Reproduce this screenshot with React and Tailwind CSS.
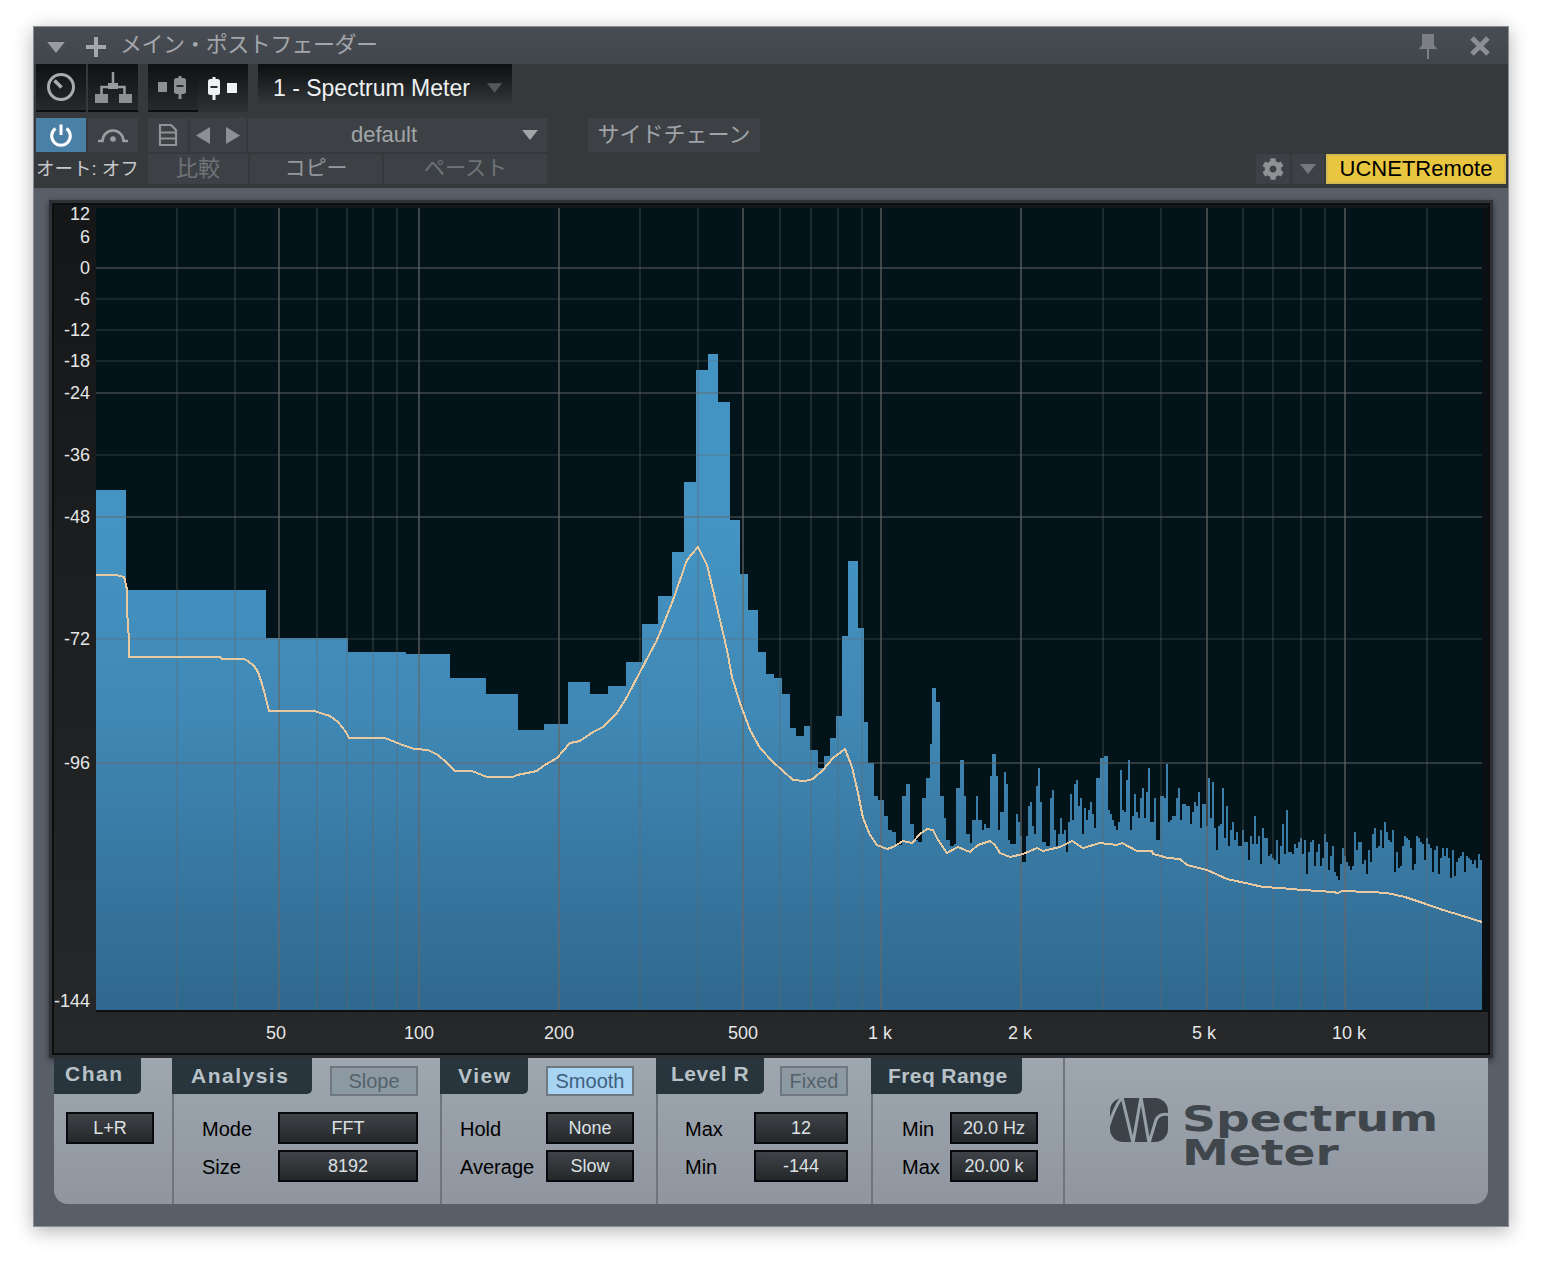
import React from "react";
import { FaCog } from "react-icons/fa";

// spectrum outline, page coordinates: [right edge of the step, top]
const steps = [
  [126, 490], [266, 590], [348, 638], [406, 652], [450, 654], [486, 678], [518, 694], [544, 730], [568, 724], [590, 682],
  [608, 694], [626, 686], [642, 662], [658, 624], [672, 596], [684, 552], [696, 482], [708, 370], [718, 354], [730, 402],
  [740, 520], [748, 574], [758, 610], [766, 652], [774, 674], [782, 678], [790, 694], [796, 728], [804, 736], [810, 726],
  [818, 750], [824, 768], [830, 756], [836, 738], [842, 716], [848, 636], [858, 561], [864, 628], [868, 722], [874, 763],
  [878, 796], [884, 800], [888, 816], [892, 830], [896, 832], [902, 845], [906, 796], [910, 784], [914, 824], [918, 840],
  [922, 842], [926, 798], [930, 778], [932, 744], [936, 688], [940, 702], [944, 796], [946, 818], [950, 840], [954, 846],
  [956, 844], [960, 788], [964, 760], [966, 796], [970, 834], [972, 843], [976, 820], [978, 796], [982, 820], [984, 830],
  [986, 824], [990, 828], [992, 776], [996, 754], [998, 776], [1000, 830], [1004, 812], [1006, 772], [1008, 784],
  [1010, 840], [1014, 844],
];

// from x = 1014 on the bins are 2px wide
const fineTops = [
  844, 814, 822, 836, 862, 862, 836, 806, 802, 826, 834, 786, 768, 802, 842, 842, 846, 846, 798, 790, 830, 846, 834, 818,
  834, 830, 852, 822, 794, 820, 784, 780, 806, 798, 834, 808, 820, 810, 802, 814, 828, 778, 778, 758, 758, 756, 756, 810,
  814, 820, 826, 830, 822, 770, 810, 812, 780, 760, 830, 816, 794, 812, 818, 798, 788, 818, 792, 768, 822, 822, 798, 840,
  840, 796, 796, 798, 764, 822,
  820, 816, 816, 798, 788, 820, 804, 804, 806, 806, 824, 812, 802, 806, 792, 828, 804, 804, 826, 778, 818, 782, 828, 850,
  826, 824, 788, 838, 806, 846, 830, 822, 840, 832, 846, 846, 830, 842, 842, 860, 836, 844, 816, 844, 836, 864, 828, 838,
  838, 856, 854, 858, 860, 840, 864, 846, 824, 854, 810, 852, 852, 854, 844, 848, 842, 838, 854, 840, 874, 852, 842, 840,
  866, 852, 844, 866, 858, 834, 842, 870, 856, 846, 872, 876, 880, 864, 848, 856, 862, 866, 870, 866, 832, 850, 842, 842,
  864, 860, 874, 850, 862, 834, 828, 848, 846, 830, 848, 822, 832, 840, 842, 830, 872, 852, 868, 866, 846, 836, 838, 840,
  848, 870, 864, 836, 838, 842, 844, 860, 838, 844, 848, 872, 850, 846, 874, 858, 848, 856, 848, 858, 878, 850, 876, 862,
  858, 856, 852, 872, 856, 858, 860, 864, 860, 868, 854, 860,
];

const curve = [
  [96, 575], [116, 575], [124, 577], [125, 580], [127, 590], [127, 610], [129, 640], [129, 657], [220, 657], [222, 659],
  [244, 659], [248, 661], [254, 666], [258, 672], [262, 684], [265, 695], [268, 707], [269, 711], [315, 711], [320, 713],
  [330, 716], [338, 722], [346, 732], [349, 738], [385, 738], [395, 742], [405, 746], [415, 749], [428, 750], [438, 755],
  [447, 763], [455, 771], [472, 771], [487, 777], [513, 777], [517, 775], [527, 773], [537, 771], [543, 766], [557, 758],
  [570, 743], [580, 741], [593, 732], [603, 727], [617, 713], [627, 697], [640, 672], [657, 640], [672, 603], [687, 560],
  [698, 547], [707, 565], [713, 590], [720, 620], [727, 650], [732, 677], [740, 703], [750, 730], [760, 748], [773, 762],
  [793, 780], [805, 781], [813, 779], [823, 770], [833, 758], [845, 749], [852, 767], [858, 793], [863, 818], [870, 835],
  [877, 845], [887, 849], [893, 847], [903, 841], [912, 843], [920, 834], [927, 829], [933, 830], [938, 840], [947, 853],
  [958, 847], [965, 850], [970, 852], [978, 845], [990, 841], [995, 845], [1000, 853], [1010, 857], [1023, 854], [1037, 848],
  [1043, 851], [1060, 847], [1072, 841], [1083, 848], [1100, 843], [1117, 845], [1122, 843], [1137, 851], [1152, 851],
  [1153, 854], [1168, 858], [1180, 859], [1187, 865], [1207, 870], [1227, 879], [1250, 884], [1263, 887], [1280, 888],
  [1303, 890], [1333, 892], [1338, 893], [1342, 891], [1370, 892], [1387, 893], [1405, 897], [1423, 903], [1443, 910],
  [1463, 916], [1482, 922],
];

const spectrumPath = () => {
  let d = "M96 1010";
  let x = 96;
  steps.forEach(([end, top]) => {
    d += `L${x} ${top}L${end} ${top}`;
    x = end;
  });
  fineTops.forEach((top) => {
    d += `L${x} ${top}L${x + 2} ${top}`;
    x += 2;
  });
  return d + "L1482 1010Z";
};

const brightV = [279, 419, 559, 743, 881, 1021, 1207, 1345];
const dimV = [177, 235, 317, 347, 373, 397, 640, 698, 780, 811, 838, 862, 1103, 1161, 1243, 1273, 1301, 1325, 1427];
const brightH = [268, 393, 517, 763];
const dimH = [299, 330, 361, 455, 639];

const yLabels = [
  ["12", 214], ["6", 237], ["0", 268], ["-6", 299], ["-12", 330], ["-18", 361], ["-24", 393], ["-36", 455], ["-48", 517],
  ["-72", 639], ["-96", 763], ["-144", 1001],
];
const xLabels = [
  ["50", 276], ["100", 419], ["200", 559], ["500", 743], ["1 k", 880], ["2 k", 1020], ["5 k", 1204], ["10 k", 1349],
];

const Triangle = ({ className, color = "#8f9397" }) => (
  <svg className={className} viewBox="0 0 16 10">
    <path d="M0 0H16L8 10Z" fill={color} />
  </svg>
);

const Fader = ({ x, color }) => (
  <g>
    <path d={`M${x} 0V23`} stroke={color} strokeWidth="3" />
    <rect x={x - 6} y="2" width="12" height="16" rx="2.5" fill={color} />
    <path d={`M${x - 3.5} 10H${x + 3.5}`} stroke="#2a2c2e" strokeWidth="2" />
  </g>
);

const Toolbar = () => (
  <div className="bg-[#35393c] h-[124px] pl-[2px] flex flex-col">
    <div className="flex h-[48px]">
      <div className="flex gap-[2px] w-[102px]">
        <div className="w-[50px] bg-gradient-to-b from-[#0f1113] to-[#27292b] border-b-2 border-[#0c0d0e] flex items-center justify-center">
          <svg width="30" height="30" viewBox="0 0 30 30" fill="none" stroke="#a9abac" strokeWidth="3">
            <circle cx="15" cy="15" r="12.5" />
            <path d="M15.5 15.5L8.5 8.5" strokeWidth="3.5" />
          </svg>
        </div>
        <div className="w-[50px] bg-gradient-to-b from-[#0f1113] to-[#27292b] border-b-2 border-[#0c0d0e] flex items-center justify-center">
          <svg width="38" height="32" viewBox="0 0 38 32" className="mt-px">
            <path d="M19 0V14M7.5 23V15H30.5V23" stroke="#999b9d" strokeWidth="2.5" fill="none" />
            <rect x="14" y="11" width="10" height="6" fill="#999b9d" />
            <rect x="1" y="22" width="13" height="9" fill="#8d8f91" />
            <rect x="25" y="22" width="13" height="9" fill="#8d8f91" />
          </svg>
        </div>
      </div>
      <div className="flex ml-[10px] w-[100px]">
        <div className="w-[50px] bg-gradient-to-b from-[#0f1113] to-[#27292b] border-b-2 border-[#0c0d0e] flex items-center justify-center">
          <svg width="30" height="23" viewBox="0 0 30 23">
            <rect x="0" y="6" width="9" height="10" fill="#8e9092" />
            <Fader x={22} color="#8e9092" />
          </svg>
        </div>
        <div className="w-[50px] bg-gradient-to-b from-[#0f1113] to-[#2f3235] flex items-center justify-center">
          <svg width="30" height="23" viewBox="0 0 30 23">
            <Fader x={6} color="#f0f1f2" />
            <rect x="19" y="6" width="10" height="10" fill="#f0f1f2" />
          </svg>
        </div>
      </div>
      <div className="ml-[10px] w-[254px] h-[42px] pl-[15px] pr-[10px] bg-gradient-to-b from-[#0d0f10] to-[#35393c] flex items-center justify-between">
        <span className="text-[23px] text-[#eef0f1] pt-[7px]">1 - Spectrum Meter</span>
        <Triangle className="w-[15px] h-[10px] mt-[5px]" color="#54585c" />
      </div>
    </div>

    <div className="flex h-[34px] mt-[6px]">
      <div className="w-[50px] bg-[#4a80a6] flex items-center justify-center">
        <svg width="24" height="24" viewBox="0 0 24 24" fill="none" stroke="#ffffff" strokeWidth="3">
          <path d="M12 1.5V12" />
          <path d="M6.5 5.5A9.3 9.3 0 1 0 17.5 5.5" />
        </svg>
      </div>
      <div className="w-[50px] ml-[2px] bg-[#3d4145] flex items-center justify-center">
        <svg width="32" height="18" viewBox="0 0 32 18" fill="none" stroke="#9c9fa2" strokeWidth="2.5">
          <path d="M1 15H5.5A10.5 10.5 0 0 1 26.5 15H31" />
          <circle cx="16" cy="13" r="2.8" fill="#9c9fa2" stroke="none" />
        </svg>
      </div>
      <div className="w-[40px] ml-[10px] bg-[#3d4145] flex items-center justify-center">
        <svg width="20" height="22" viewBox="0 0 20 22" fill="none" stroke="#8f9396" strokeWidth="2.2">
          <path d="M2 1H13L18 6V21H2Z" />
          <path d="M2 8.5H18M2 14.5H18" />
        </svg>
      </div>
      <div className="w-[56px] ml-[2px] bg-[#3d4145] flex items-center justify-between px-[6px]">
        <svg width="14" height="17" viewBox="0 0 14 17"><path d="M14 0V17L0 8.5Z" fill="#8d9094" /></svg>
        <svg width="14" height="17" viewBox="0 0 14 17"><path d="M0 0V17L14 8.5Z" fill="#8d9094" /></svg>
      </div>
      <div className="w-[299px] ml-[2px] bg-[#3d4145] relative flex items-center justify-center text-[22px] text-[#a1a5a8] pb-[2px]">
        <span className="pr-[27px]">default</span>
        <Triangle className="absolute right-[9px] top-[12px] w-[16px] h-[10px]" color="#a1a5a8" />
      </div>
      <div className="w-[172px] ml-[41px] bg-[#3d4145] flex items-center justify-center text-[22px] text-[#a0a4a8] pb-[2px]">
        サイドチェーン
      </div>
    </div>

    <div className="flex h-[30px] mt-[2px]">
      <div className="w-[112px] pr-[10px] flex items-center text-[18.5px] whitespace-nowrap text-[#c6c9cb]">オート: オフ</div>
      <div className="w-[100px] bg-[#3d4145] flex items-center justify-center text-[22px] text-[#6f7478] pb-[2px]">比較</div>
      <div className="w-[132px] ml-[2px] bg-[#3d4145] flex items-center justify-center text-[21px] text-[#95989c] pb-[2px]">コピー</div>
      <div className="w-[163px] ml-[2px] bg-[#3d4145] flex items-center justify-center text-[21px] text-[#6f7478] pb-[2px]">ペースト</div>
      <div className="ml-auto mr-[2px] flex">
        <div className="w-[34px] bg-[#3d4145] flex items-center justify-center">
          <FaCog className="w-[22px] h-[22px] text-[#8f9295]" />
        </div>
        <div className="w-[32px] ml-[2px] bg-[#3d4145] flex items-center justify-center">
          <Triangle className="w-[16px] h-[10px]" color="#75797d" />
        </div>
        <div className="w-[180px] ml-[2px] bg-[#e9c63f] border-2 border-[#d6bb52] flex items-center justify-center text-[22px] text-black pb-[2px]">
          UCNETRemote
        </div>
      </div>
    </div>
  </div>
);

const Meter = () => (
  <div className="h-[858px] border-[3px] border-[#2d3135] shadow-[0_2px_6px_rgba(0,0,0,0.5)]">
    <div className="h-full border-2 border-[#0c0e0f] bg-gradient-to-b from-[#141618] to-[#26282a] pt-[3px] flex flex-col">
      <div className="flex h-[802px]">
        <div className="w-[42px] relative text-[18px] leading-[20px] text-[#e4e6e7]">
          {yLabels.map(([t, y]) => (
            <span key={t} className="absolute right-[6px]" style={{ top: y - 218 }}>
              {t}
            </span>
          ))}
        </div>
        <svg width="1386" height="802" viewBox="96 208 1386 802" className="bg-[#02141a] block shrink-0">
          <defs>
            <linearGradient id="fill" gradientUnits="userSpaceOnUse" x1="0" y1="520" x2="0" y2="1010">
              <stop offset="0" stopColor="#4494c3" />
              <stop offset="0.4" stopColor="#4088b5" />
              <stop offset="1" stopColor="#2f688e" />
            </linearGradient>
          </defs>
          <path d={spectrumPath()} fill="url(#fill)" />
          {dimV.map((x) => (
            <path key={x} d={`M${x} 208V1010`} stroke="#666" strokeOpacity="0.28" strokeWidth="2" />
          ))}
          {brightV.map((x) => (
            <path key={x} d={`M${x} 208V1010`} stroke="#666" strokeOpacity="0.62" strokeWidth="2" />
          ))}
          {dimH.map((y) => (
            <path key={y} d={`M96 ${y}H1482`} stroke="#666" strokeOpacity="0.32" strokeWidth="1.5" />
          ))}
          {brightH.map((y) => (
            <path key={y} d={`M96 ${y}H1482`} stroke="#666" strokeOpacity="0.62" strokeWidth="1.5" />
          ))}
          <polyline
            points={curve.map((p) => p.join(",")).join(" ")}
            fill="none"
            stroke="#e9c9a0"
            strokeWidth="2"
            shapeRendering="crispEdges"
          />
        </svg>
        <div className="flex-1 bg-[#0a1013]" />
      </div>
      <div className="flex-1 ml-[42px] relative text-[18px] leading-[20px] text-[#e4e6e7] border-t-2 border-[#0c0e0f]">
        {xLabels.map(([t, x]) => (
          <span key={t} className="absolute top-[11px] -translate-x-1/2 whitespace-nowrap" style={{ left: x - 96 }}>
            {t}
          </span>
        ))}
      </div>
    </div>
  </div>
);

const Tab = ({ className, children }) => (
  <div className={`h-[36px] bg-[#28353c] rounded-br-[5px] flex items-center font-bold text-[21px] text-[#b9c2c8] ${className}`}>
    {children}
  </div>
);

const Toggle = ({ className, children }) => (
  <div className={`h-[30px] mt-2 border-2 border-[#6f7880] flex items-center justify-center text-[20px] ${className}`}>
    {children}
  </div>
);

const Btn = ({ className, children }) => (
  <div className={`h-8 border-2 border-[#08090a] bg-gradient-to-b from-[#3f4347] to-[#25282b] flex items-center justify-center text-[18px] text-[#dde1e3] ${className}`}>
    {children}
  </div>
);

const Row = ({ label, labelClass, btnClass, value }) => (
  <div className="flex items-center">
    <span className={`text-[20px] text-black pt-[2px] ${labelClass}`}>{label}</span>
    <Btn className={btnClass}>{value}</Btn>
  </div>
);

const Controls = () => (
  <div className="ml-[5px] w-[1434px] h-[146px] rounded-b-[14px] bg-gradient-to-b from-[#9ea6b0] to-[#8f969f] flex">
    <div className="w-[118px] flex flex-col">
      <Tab className="w-[87px] pl-[11px] pb-1 tracking-[1.5px]">Chan</Tab>
      <div className="mt-[18px] pl-3">
        <Btn className="w-[88px]">L+R</Btn>
      </div>
    </div>

    <div className="w-[268px] border-l-2 border-[#6e757d] flex flex-col">
      <div className="flex h-[36px]">
        <Tab className="w-[140px] -ml-0.5 pl-[19px] tracking-[1.5px]">Analysis</Tab>
        <Toggle className="w-[88px] ml-[18px] bg-gradient-to-b from-[#8e99a2] to-[#8a9aa3] text-[#56626b]">Slope</Toggle>
      </div>
      <div className="mt-[18px] pl-[28px] flex flex-col gap-1.5">
        <Row label="Mode" labelClass="w-[76px]" btnClass="w-[140px]" value="FFT" />
        <Row label="Size" labelClass="w-[76px]" btnClass="w-[140px]" value="8192" />
      </div>
    </div>

    <div className="w-[216px] border-l-2 border-[#6e757d] flex flex-col">
      <div className="flex h-[36px]">
        <Tab className="w-[88px] -ml-0.5 pl-[18px] tracking-[1.5px]">View</Tab>
        <Toggle className="w-[88px] ml-[18px] bg-[#a6d4f2] text-[#3f6080]">Smooth</Toggle>
      </div>
      <div className="mt-[18px] pl-[18px] flex flex-col gap-1.5">
        <Row label="Hold" labelClass="w-[86px]" btnClass="w-[88px]" value="None" />
        <Row label="Average" labelClass="w-[86px]" btnClass="w-[88px]" value="Slow" />
      </div>
    </div>

    <div className="w-[215px] border-l-2 border-[#6e757d] flex flex-col">
      <div className="flex h-[36px]">
        <Tab className="w-[108px] -ml-0.5 pl-[15px] pb-1 tracking-[0.5px]">Level R</Tab>
        <Toggle className="w-[68px] ml-[16px] bg-gradient-to-b from-[#8e99a2] to-[#8a9aa3] text-[#56626b]">Fixed</Toggle>
      </div>
      <div className="mt-[18px] pl-[27px] flex flex-col gap-1.5">
        <Row label="Max" labelClass="w-[69px]" btnClass="w-[94px]" value="12" />
        <Row label="Min" labelClass="w-[69px]" btnClass="w-[94px]" value="-144" />
      </div>
    </div>

    <div className="w-[192px] border-l-2 border-[#6e757d] flex flex-col">
      <Tab className="w-[151px] -ml-0.5 pl-[17px] tracking-[0.4px]">Freq Range</Tab>
      <div className="mt-[18px] pl-[29px] flex flex-col gap-1.5">
        <Row label="Min" labelClass="w-[48px]" btnClass="w-[88px]" value="20.0 Hz" />
        <Row label="Max" labelClass="w-[48px]" btnClass="w-[88px]" value="20.00 k" />
      </div>
    </div>

    <div className="flex-1 border-l-2 border-[#6e757d] pl-[45px] pt-[40px] flex gap-[14px] items-start">
      <svg width="58" height="44" viewBox="0 0 58 44" className="shrink-0">
        <rect x="0" y="0" width="58" height="44" rx="13" fill="#3b4349" />
        <path
          d="M-2 30Q4 10 12 -1L23 45L31 -1L39 45L46 22Q50 14 60 17"
          fill="none"
          stroke="#98a0aa"
          strokeWidth="3"
          strokeLinejoin="round"
        />
      </svg>
      <div className="font-['DejaVu_Sans',sans-serif] font-bold text-[36px] leading-[34px] text-[#3f464c] origin-left scale-x-[1.31] mt-[4px]">
        <div>Spectrum</div>
        <div>Meter</div>
      </div>
    </div>
  </div>
);

const App = () => (
  <div className="w-[1542px] h-[1268px] overflow-hidden bg-white pt-[26px] pl-[33px] font-['Liberation_Sans','Noto_Sans_CJK_JP',sans-serif]">
    <div className="w-[1476px] h-[1201px] border border-[#8a8e93] bg-[#585f69] shadow-[0_4px_18px_rgba(0,0,0,0.3)]">
      <div className="h-[37px] bg-gradient-to-b from-[#484c53] to-[#41454c] flex items-center">
        <Triangle className="ml-[12px] w-[20px] h-[11px] mt-[3px]" color="#999da1" />
        <svg width="20" height="20" viewBox="0 0 20 20" className="ml-[20px] mt-[2px]">
          <path d="M10 0V20M0 10H20" stroke="#a3a7aa" strokeWidth="4" />
        </svg>
        <span className="ml-[14px] text-[22px] tracking-[-0.55px] text-[#a3a7ab] whitespace-nowrap pb-[2px]">メイン・ポストフェーダー</span>
        <svg width="18" height="25" viewBox="0 0 18 25" className="ml-auto mt-[2px]">
          <path d="M3 0H15V11L18 15H10V25H8V15H0L3 11Z" fill="#7c8084" />
        </svg>
        <svg width="20" height="20" viewBox="0 0 20 20" className="ml-[33px] mr-[18px] mt-[1px]">
          <path d="M2 2L18 18M18 2L2 18" stroke="#8b8f93" strokeWidth="5" />
        </svg>
      </div>
      <Toolbar />
      <div className="pl-[15px] pt-[12px]">
        <div className="w-[1444px]">
          <Meter />
          <Controls />
        </div>
      </div>
    </div>
  </div>
);

export default App;
